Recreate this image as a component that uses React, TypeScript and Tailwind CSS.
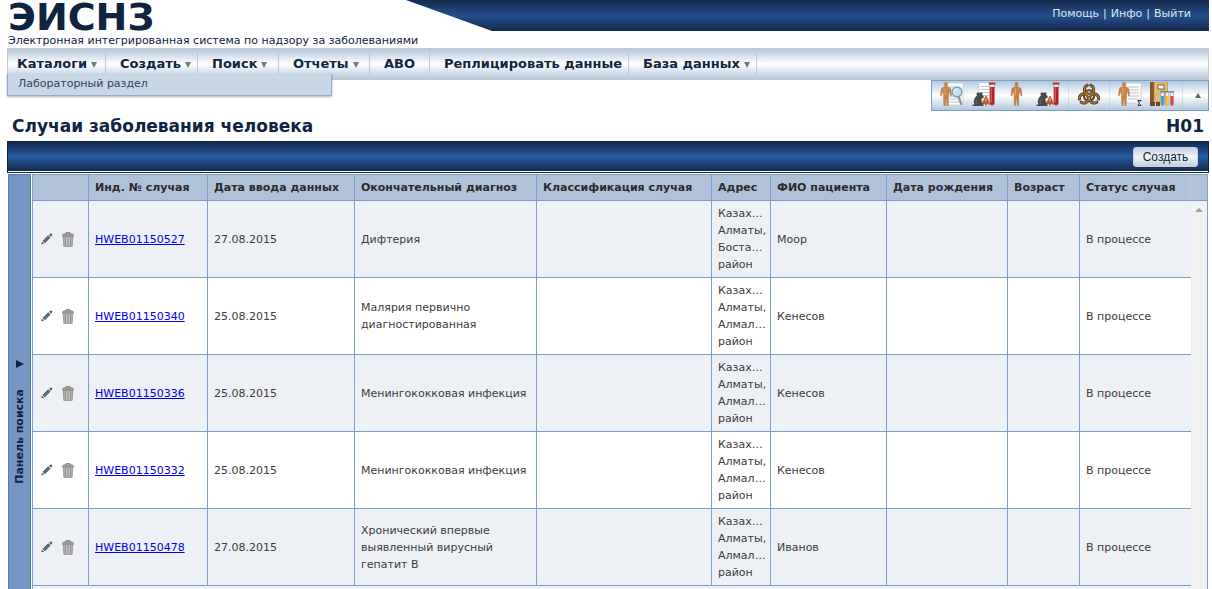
import React from "react";

const Person = ({ x = 0 }: { x?: number }) => (
  <g transform={`translate(${x} 0)`} fill="#c4854a" stroke="#a5672e" strokeWidth=".3">
    <ellipse cx="6" cy="2.4" rx="1.7" ry="2.300" />
    <path d="M4.9 4.800 L2.400 5.600 Q1.300 6 1.100 7.500 L.4 13.600 Q.8 15 1.500 13.600 L2.900 8.600 L3.300 12.500 L3.600 18 L3.800 23.600 L5.100 24 L6 15 L6.900 24 L8.200 23.600 L8.400 18 L8.700 12.500 L9.100 8.600 L10.500 13.600 Q11.200 15 11.600 13.600 L10.900 7.500 Q10.700 6 9.600 5.600 L7.100 4.800 Z" />
    <path d="M5 6.500v7" stroke="#e0aa74" strokeWidth=".9" />
  </g>
);

const Sheet = ({ x, y, w, h }: { x: number; y: number; w: number; h: number }) => (
  <g>
    <rect x={x} y={y} width={w} height={h} fill="#fbfbf9" stroke="#c3c7cc" strokeWidth=".7" />
    {[4, 7, 10, 13, 16, 19].filter((d) => d < h - 1).map((d) => (
      <path key={d} d={`M${x + 2} ${y + d}h${w - 4}`} stroke="#b4bac1" strokeWidth=".8" />
    ))}
  </g>
);

const Vector = () => (
  <g>
    <path
      d="M0 24 Q.2 22.600 2.400 22.200 Q.8 19 2.600 16.200 Q3.600 14.400 5 13.400 Q3.600 11.200 5.600 10.400 Q6.800 10.200 7.400 11.200 Q8.400 9.600 10 10.600 Q10.800 11.400 10.200 12.600 L12 15 Q11.400 16.300 9.800 16 L9.400 18.500 L11.200 22.400 L11.600 24 Z"
      fill="#48494c"
    />
    <path d="M4.500 17.500Q3.500 20 5 22" fill="none" stroke="#6d6f73" strokeWidth=".8" />
    <path d="M14 14 L15.400 17 L18 22.500 L15.500 21.500 L15 19.500 L14 23.500 L13 19.500 L12.500 21.500 L10 22.500 L12.600 17 Z" fill="#e8662a" stroke="#7c2d12" strokeWidth=".6" />
    <path d="M14 15.500v4" stroke="#f7a23a" />
    <path d="M17.700 2v19.200a2.400 2.400 0 0 0 4.800 0V2z" fill="#eef0f2" stroke="#8d8f96" strokeWidth=".7" />
    <path d="M18 5h4.200v16.200a2.100 2.100 0 0 1-4.200 0z" fill="#c41a1d" />
    <path d="M19.200 5.500v15" stroke="#ef7775" strokeWidth=".8" />
    <rect x="16.700" y=".6" width="6.800" height="2" rx=".6" fill="#a93434" />
  </g>
);

const iconClass = "size-6";

const CaseSearchIcon = () => (
  <svg viewBox="0 0 24 24" className={iconClass} aria-hidden="true">
    <Sheet x={6} y={1} w={17} h={22} />
    <Person />
    <path d="M18.500 14.500l2.800 7.500" stroke="#8f969f" strokeWidth="2.200" strokeLinecap="round" />
    <circle cx="17" cy="10" r="4.800" fill="#c4e0f4" stroke="#7f9cbb" strokeWidth="1.400" />
    <path d="M14.200 9.500a3 3 0 0 1 2.800-2.500" fill="none" stroke="#fff" />
  </svg>
);
const VectorReportIcon = () => (
  <svg viewBox="0 0 24 24" className={iconClass} aria-hidden="true">
    <Sheet x={7} y={0.5} w={14} h={18} />
    <Vector />
  </svg>
);
const PersonIcon = () => (
  <svg viewBox="0 0 24 24" className={iconClass} aria-hidden="true">
    <Person x={6.5} />
  </svg>
);
const VectorIcon = () => (
  <svg viewBox="0 0 24 24" className={iconClass} aria-hidden="true">
    <Vector />
  </svg>
);

const lobes = [0, 120, 240];
const BiohazardIcon = () => (
  <svg viewBox="0 0 24 24" className={iconClass} aria-hidden="true">
    <g fill="none" strokeLinecap="round">
      {lobes.map((a) => (
        <path key={a} transform={`rotate(${a} 12 13.500)`} d="M10.200 3.400A4.600 4.600 0 1 0 13.800 3.400" stroke="#3d2811" strokeWidth="3" />
      ))}
      <circle cx="12" cy="13.500" r="5.200" stroke="#3d2811" strokeWidth="2" />
      {lobes.map((a) => (
        <path key={a} transform={`rotate(${a} 12 13.500)`} d="M10.200 3.400A4.600 4.600 0 1 0 13.800 3.400" stroke="#b47a38" strokeWidth="1.500" />
      ))}
      <circle cx="12" cy="13.500" r="5.200" stroke="#94622b" strokeWidth=".8" />
    </g>
    <circle cx="12" cy="13.500" r="1.200" fill="#e3e9f2" stroke="#3d2811" strokeWidth=".7" />
  </svg>
);
const SummaryIcon = () => (
  <svg viewBox="0 0 24 24" className={iconClass} aria-hidden="true">
    <Sheet x={8} y={1} w={15} h={20} />
    <Person />
    <rect x="18.500" y="17.500" width="6" height="7" fill="#e8edf4" />
    <path d="M23 19.500v-1H19.800l1.700 2.400-1.700 2.400H23v-1" fill="none" stroke="#1f2328" strokeWidth="1" />
  </svg>
);
const LabJournalIcon = () => (
  <svg viewBox="0 0 24 24" className={iconClass} aria-hidden="true">
    <rect x="0" y="0" width="4" height="20" fill="#85562a" />
    <rect x="4" y="0" width="13.500" height="20" fill="#e0b878" stroke="#b98843" strokeWidth=".6" />
    <path d="M0 20h5v4H0zM6 20h4v4H6z" fill="#70451f" />
    <rect x="8" y="3" width="6" height="4" fill="#fff" stroke="#80613a" />
    {[
      { color: "#3c9bd0", x: 10.5 },
      { color: "#efc51e", x: 15.2 },
      { color: "#dc4038", x: 19.9 },
    ].map((t) => (
      <g key={t.color} transform={`translate(${t.x} 0)`}>
        <path d="M.3 10v12a1.700 1.700 0 0 0 3.400 0V10z" fill="#edf5fb" stroke="#7f8a94" strokeWidth=".6" />
        <path d="M.6 14h2.800v8a1.400 1.400 0 0 1-2.800 0z" fill={t.color} />
        <path d="M-.2 9.800h4.400" stroke="#6c7680" strokeWidth="1.200" />
      </g>
    ))}
  </svg>
);

const PencilIcon = () => (
  <svg viewBox="0 0 12 12" className="size-3" aria-hidden="true">
    <path d="M.2 11.300L1 8.800L2.900 10.700Z" fill="#4a525b" />
    <path d="M1.600 7.900L7.200 2.300L9.500 4.600L3.800 10.200Z" fill="#4c5763" />
    <path d="M2.800 8.900L8.300 3.500" stroke="#8794a2" strokeWidth=".8" />
    <path d="M8.100 1.700L9.300.7Q10.200.2 10.900 1Q11.600 1.900 11 2.600L10.100 3.700Z" fill="#505b67" />
  </svg>
);
const TrashIcon = () => (
  <svg viewBox="0 0 12 15" className="h-[15px] w-3" aria-hidden="true">
    <path d="M4 2V.7h4V2" fill="none" stroke="#777" />
    <path d="M.4 3.500Q.5 1.900 2.500 1.800h7Q11.500 1.900 11.600 3.500v.8H.4z" fill="#a19f9d" stroke="#72706e" strokeWidth=".6" />
    <path d="M1.300 4.600h9.400l-.5 9.800H1.800z" fill="#b3b1af" stroke="#8a8886" strokeWidth=".7" />
    <path d="M3.600 5.500v8M6 5.500v8M8.400 5.500v8" stroke="#858381" strokeWidth=".8" />
    <path d="M4.700 5.500v8M7.200 5.500v8" stroke="#d5d3d1" strokeWidth=".7" />
  </svg>
);

const menu = [
  { label: "Каталоги", drop: true, cls: "w-[98px] pl-[9px]" },
  { label: "Создать", drop: true, cls: "w-[92px] pl-[14px]" },
  { label: "Поиск", drop: true, cls: "w-[81px] pl-[14px]" },
  { label: "Отчеты", drop: true, cls: "w-[91px] pl-[14px]" },
  { label: "АВО", drop: false, cls: "w-[60px] pl-[14px]" },
  { label: "Реплицировать данные", drop: false, cls: "w-[199px] pl-[14px]" },
  { label: "База данных", drop: true, cls: "w-[128px] pl-[14px]" },
];

const columns = [
  { label: "", cls: "w-[56px]" },
  { label: "Инд. № случая", cls: "w-[119px]" },
  { label: "Дата ввода данных", cls: "w-[147px]" },
  { label: "Окончательный диагноз", cls: "w-[182px]" },
  { label: "Классификация случая", cls: "w-[175px]" },
  { label: "Адрес", cls: "w-[59px]" },
  { label: "ФИО пациента", cls: "w-[116px]" },
  { label: "Дата рождения", cls: "w-[121px]" },
  { label: "Возраст", cls: "w-[72px]" },
  { label: "Статус случая", cls: "w-[111px]" },
];

const rows = [
  { id: "HWEB01150527", date: "27.08.2015", diagnosis: "Дифтерия", district: "Боста…", name: "Моор" },
  { id: "HWEB01150340", date: "25.08.2015", diagnosis: "Малярия первично диагностированная", district: "Алмал…", name: "Кенесов" },
  { id: "HWEB01150336", date: "25.08.2015", diagnosis: "Менингококковая инфекция", district: "Алмал…", name: "Кенесов" },
  { id: "HWEB01150332", date: "25.08.2015", diagnosis: "Менингококковая инфекция", district: "Алмал…", name: "Кенесов" },
  { id: "HWEB01150478", date: "27.08.2015", diagnosis: "Хронический впервые выявленный вирусный гепатит B", district: "Алмал…", name: "Иванов" },
];

const cell = "border-b border-r border-[#7c9fc8] px-[6px] py-1";

const ToolButton = ({ label, children }: { label: string; children: React.ReactNode }) => (
  <button type="button" aria-label={label} className="flex h-full w-8 items-start justify-center pt-px">
    {children}
  </button>
);

const Divider = () => <span className="mx-1 w-px self-stretch bg-linear-to-b from-[#a9c0dc] via-[#dfe6ef] to-[#a9c0dc]" />;

export default function App() {
  return (
    <div className="h-screen overflow-hidden bg-white pr-[3px] pl-[7px] font-['DejaVu_Sans',Verdana,sans-serif] text-[11px] text-[#3c3c3c]">
      <header className="flex h-12 items-start">
        <div className="w-[399px] shrink-0 pl-px whitespace-nowrap text-[#10243f]">
          <h1 className="text-[38px] leading-[34px] font-bold">ЭИСНЗ</h1>
          <p className="leading-[14px]">Электронная интегрированная система по надзору за заболеваниями</p>
        </div>
        <nav className="flex h-[31px] flex-1 items-center justify-end gap-1 bg-linear-to-b from-[#142b4d] via-[#234f8c] to-[#142b4d] pr-[18px] pb-[2px] text-[#dde5ef] [clip-path:polygon(0_0,100%_0,100%_100%,86px_100%)]">
          <a href="#help">Помощь</a>
          <span>|</span>
          <a href="#info">Инфо</a>
          <span>|</span>
          <a href="#logout">Выйти</a>
        </nav>
      </header>

      <nav className="relative flex h-8 border border-[#c8c8c8] bg-linear-to-b from-[#b4c7de] via-white to-[#b4c7de] text-[13px] font-bold text-[#10243f]">
        {menu.map((m) => (
          <button
            key={m.label}
            type="button"
            className={`flex h-[26px] items-center gap-1 border-r border-[#c8c8c8] pt-[3px] whitespace-nowrap ${m.cls}`}
          >
            {m.label}
            {m.drop && (
              <svg viewBox="0 0 6 6" className="mt-[2px] size-[6px] shrink-0" aria-hidden="true">
                <path d="M0 0h6L3 6z" fill="#777" />
              </svg>
            )}
          </button>
        ))}
        <div className="absolute top-[25px] -left-px z-10 h-[22px] w-[325px] border border-t-0 border-[#8fabd0] bg-[#c8d6e6] pl-[10px] text-[11px] leading-[20px] font-normal text-[#30445f] shadow-[0_1px_2px_rgba(0,0,0,0.3)]">
          <a href="#lab">Лабораторный раздел</a>
        </div>
      </nav>

      <div className="flex justify-end">
        <div className="flex h-[31px] w-[278px] items-center border border-[#7c9fc8] bg-linear-to-b from-[#b4c7de] via-white to-[#b4c7de] pl-1">
          <ToolButton label="Поиск случаев"><CaseSearchIcon /></ToolButton>
          <ToolButton label="Отчет по переносчикам"><VectorReportIcon /></ToolButton>
          <ToolButton label="Случай человека"><PersonIcon /></ToolButton>
          <ToolButton label="Случай животного"><VectorIcon /></ToolButton>
          <Divider />
          <ToolButton label="Вспышки"><BiohazardIcon /></ToolButton>
          <Divider />
          <ToolButton label="Сводный отчет"><SummaryIcon /></ToolButton>
          <ToolButton label="Лабораторный журнал"><LabJournalIcon /></ToolButton>
          <Divider />
          <button type="button" aria-label="Свернуть" className="flex h-full flex-1 items-center justify-center">
            <svg viewBox="0 0 6 5" className="h-[5px] w-[6px]" aria-hidden="true">
              <path d="M3 0l3 5H0z" fill="#666" />
            </svg>
          </button>
        </div>
      </div>

      <div className="flex h-[30px] items-center justify-between px-[5px] pt-[2px] text-[17px] font-bold text-[#10243f]">
        <h2>Случаи заболевания человека</h2>
        <span>H01</span>
      </div>

      <div className="h-8 border border-[#10243f] pb-px">
        <div className="flex h-full items-center justify-end bg-linear-to-b from-[#142b4d] via-[#255ca3] to-[#142b4d] pr-[10px]">
          <button
            type="button"
            className="h-5 w-[65px] rounded-[3px] border border-[#c9d4e2] bg-linear-to-b from-[#c3d0e1] via-[#f2f5f9] to-[#c3d0e1] font-['Liberation_Sans',Arial,sans-serif] text-xs leading-[18px] text-[#10243f]"
          >
            Создать
          </button>
        </div>
      </div>

      <main className="mt-px flex pr-px pl-px">
        <button
          type="button"
          className="mr-px flex w-[23px] shrink-0 flex-col items-center border border-[#4f7fb8] bg-[#7696c3] pt-[185px] font-bold text-[#10243f]"
        >
          <svg viewBox="0 0 8 8" className="mb-[21px] size-2" aria-hidden="true">
            <path d="M0 0l8 4-8 4z" fill="#10243f" />
          </svg>
          <span className="rotate-180 leading-[14px] whitespace-nowrap [writing-mode:vertical-rl]">Панель поиска</span>
        </button>

        <div className="min-w-0 flex-1 border-t border-l border-[#7c9fc8]">
          <table className="w-full table-fixed border-separate border-spacing-0 text-left leading-[17px]">
            <thead>
              <tr className="h-[26px] bg-[#b0c1da] text-[#2b2b2b]">
                {columns.map((c, i) => (
                  <th
                    key={c.label}
                    scope="col"
                    className={`border-r border-b px-[6px] font-bold whitespace-nowrap ${i === 9 ? "border-r-[#c8c8c8] border-b-[#7c9fc8]" : "border-[#7c9fc8]"} ${c.cls}`}
                  >
                    {c.label}
                  </th>
                ))}
                <th className="w-[17px] border-r border-b border-[#7c9fc8]" />
              </tr>
            </thead>
            <tbody>
              {rows.map((r, i) => (
                <tr key={r.id} className="h-[77px] odd:bg-[#edf0f5] even:bg-white">
                  <td className="border-r border-b border-[#7c9fc8] pl-2">
                    <div className="flex items-center gap-[9px]">
                      <button type="button" aria-label={`Изменить ${r.id}`}><PencilIcon /></button>
                      <button type="button" aria-label={`Удалить ${r.id}`}><TrashIcon /></button>
                    </div>
                  </td>
                  <td className={cell}>
                    <a href={`#${r.id}`} className="text-[#0000ee] underline">{r.id}</a>
                  </td>
                  <td className={cell}>{r.date}</td>
                  <td className={cell}>{r.diagnosis}</td>
                  <td className={cell} />
                  <td className={`${cell} whitespace-nowrap`}>
                    <div>Казах…</div>
                    <div>Алматы,</div>
                    <div>{r.district}</div>
                    <div>район</div>
                  </td>
                  <td className={cell}>{r.name}</td>
                  <td className={cell} />
                  <td className={cell} />
                  <td className="border-b border-[#7c9fc8] px-[6px]">В процессе</td>
                  {i === 0 && (
                    <td rowSpan={6} className="border-r border-[#7c9fc8] bg-[#f1f1f1] pt-[7px] align-top">
                      <svg viewBox="0 0 8 4" className="mx-auto h-1 w-2" aria-hidden="true">
                        <path d="M4 0l4 4H0z" fill="#a0a0a0" />
                      </svg>
                    </td>
                  )}
                </tr>
              ))}
              <tr className="h-[77px] bg-[#edf0f5]">
                <td colSpan={10} />
              </tr>
            </tbody>
          </table>
        </div>
      </main>
    </div>
  );
}
